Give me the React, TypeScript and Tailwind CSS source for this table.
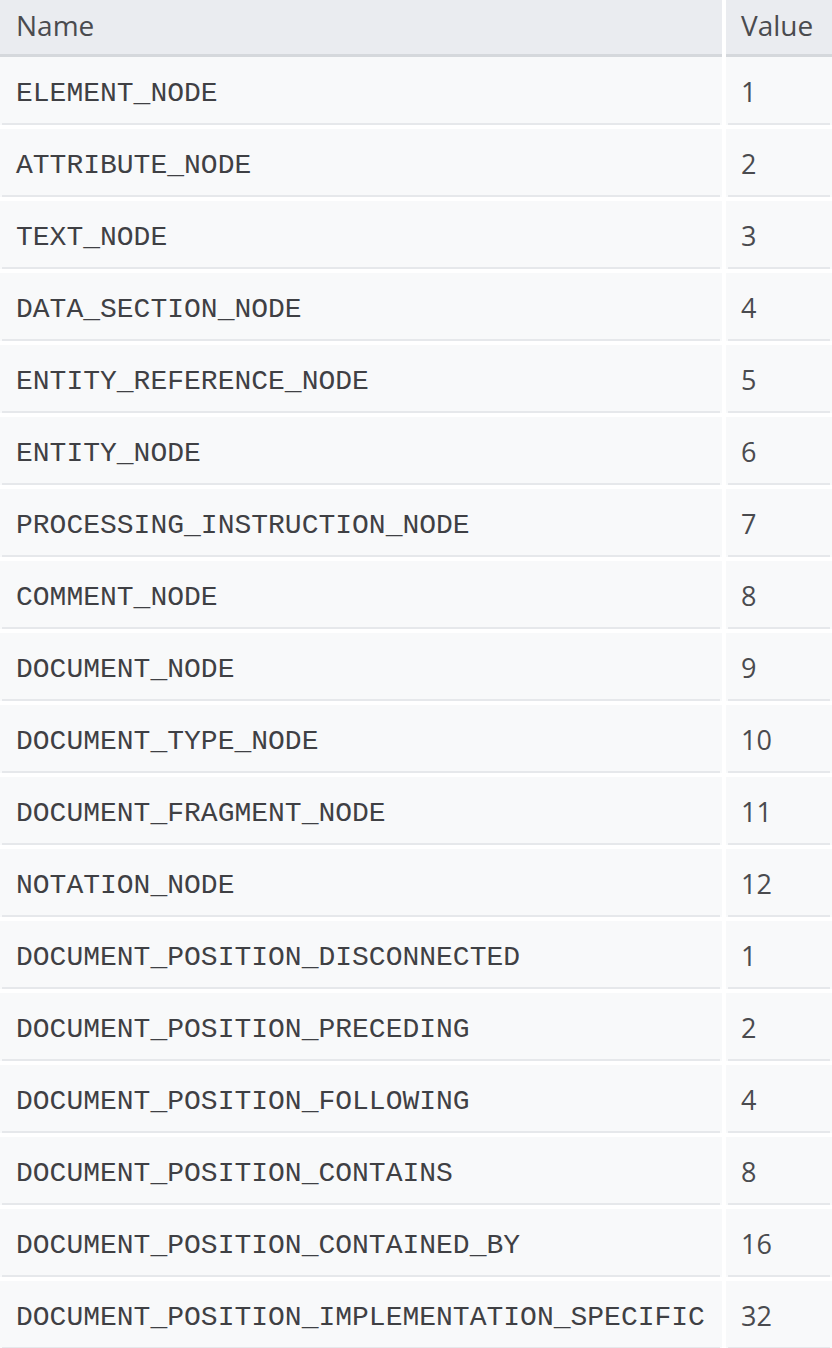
import React from "react";

const rows: [string, string][] = [
  ["ELEMENT_NODE", "1"],
  ["ATTRIBUTE_NODE", "2"],
  ["TEXT_NODE", "3"],
  ["DATA_SECTION_NODE", "4"],
  ["ENTITY_REFERENCE_NODE", "5"],
  ["ENTITY_NODE", "6"],
  ["PROCESSING_INSTRUCTION_NODE", "7"],
  ["COMMENT_NODE", "8"],
  ["DOCUMENT_NODE", "9"],
  ["DOCUMENT_TYPE_NODE", "10"],
  ["DOCUMENT_FRAGMENT_NODE", "11"],
  ["NOTATION_NODE", "12"],
  ["DOCUMENT_POSITION_DISCONNECTED", "1"],
  ["DOCUMENT_POSITION_PRECEDING", "2"],
  ["DOCUMENT_POSITION_FOLLOWING", "4"],
  ["DOCUMENT_POSITION_CONTAINS", "8"],
  ["DOCUMENT_POSITION_CONTAINED_BY", "16"],
  ["DOCUMENT_POSITION_IMPLEMENTATION_SPECIFIC", "32"],
];

export default function App() {
  return (
    <div className="w-[832px] h-[1348px] overflow-hidden bg-white font-['Open_Sans',sans-serif] text-[#4a4b4f]">
      <div className="grid grid-cols-[722px_106px] gap-x-[4px] gap-y-0">
        <div className="h-[57px] bg-[#eaecf0] border-b-[3px] border-[#d5d8dc] pl-[16px] flex items-center text-[28px] leading-none pb-[4px]">
          Name
        </div>
        <div className="h-[57px] bg-[#eaecf0] border-b-[3px] border-[#d5d8dc] pl-[15px] flex items-center text-[28px] leading-none pb-[4px]">
          Value
        </div>
      </div>
      <div className="flex flex-col gap-[4px]">
        {rows.map(([name, value], i) => (
          <div key={i} className="grid grid-cols-[722px_106px] gap-x-[4px]">
            <div className="h-[68px] bg-[#f8f9fa] px-[2px] flex flex-col">
              <div className="flex-1 flex items-center pl-[14px] pt-[8px] font-['Liberation_Mono',monospace] text-[28px] leading-none text-[#3f4044]">
                {name}
              </div>
              <div className="h-[2px] bg-[#e6e8eb]" />
            </div>
            <div className="h-[68px] bg-[#f8f9fa] px-[2px] flex flex-col">
              <div className="flex-1 flex items-center pl-[13px] pt-[3px] text-[27px] leading-none">
                {value}
              </div>
              <div className="h-[2px] bg-[#e6e8eb]" />
            </div>
          </div>
        ))}
      </div>
    </div>
  );
}
